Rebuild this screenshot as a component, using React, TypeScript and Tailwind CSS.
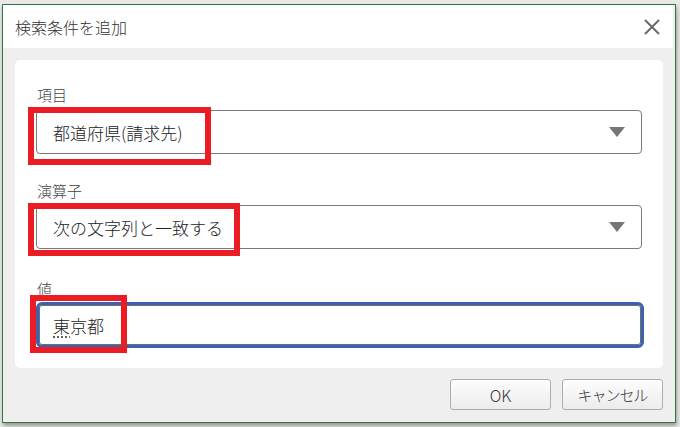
import React from "react";

function Caret() {
  return (
    <svg width="16" height="10" viewBox="0 0 16 10" className="shrink-0">
      <polygon points="0,0 16,0 8,10" fill="#767676" />
    </svg>
  );
}

function CloseIcon() {
  return (
    <svg width="16" height="16" viewBox="0 0 16 16">
      <path d="M1 1 L15 15 M15 1 L1 15" stroke="#6a6a6a" strokeWidth="2" />
    </svg>
  );
}

function Select({ value }: { value: string }) {
  return (
    <div className="flex h-[44px] w-[606px] items-center justify-between rounded-[4px] border border-[#7a7a7a] bg-white pl-[16px] pr-[16px]">
      <span className="text-[17px] font-light leading-none text-[#222]">{value}</span>
      <Caret />
    </div>
  );
}

export default function App() {
  return (
    <div className="relative h-[427px] w-[680px] overflow-hidden bg-[#e9e9e9] font-['Noto_Sans_CJK_JP',sans-serif]">
      <div className="ml-[2px] mt-[4px] flex h-[419px] w-[674px] flex-col border border-[#2e7a3a] bg-[#efefef] shadow-[1px_3px_4px_rgba(0,0,0,0.35)]">
        <div className="mr-[2px] flex h-[43px] items-center justify-between bg-white pl-[12px] pr-[13px]">
          <span className="text-[16px] font-light leading-none text-[#333]">検索条件を追加</span>
          <CloseIcon />
        </div>

        <div className="ml-[12px] mt-[12px] flex h-[308px] w-[648px] flex-col rounded-[5px] bg-white pl-[21px]">
          <div className="mt-[25px] h-[20px] pl-[1px] text-[15px] font-light leading-[20px] text-[#444]">項目</div>
          <div className="mt-[5px]">
            <Select value="都道府県(請求先)" />
          </div>

          <div className="mt-[27px] h-[20px] pl-[1px] text-[15px] font-light leading-[20px] text-[#444]">演算子</div>
          <div className="mt-[4px]">
            <Select value="次の文字列と一致する" />
          </div>

          <div className="mt-[30px] h-[20px] pl-[1px] text-[15px] font-light leading-[20px] text-[#444]">値</div>
          <div className="mt-[3px] flex h-[46px] w-[608px] items-center rounded-[6px] border-[3px] border-[#3a62b0] bg-white pl-[14px] shadow-[inset_0_0_0_1px_#6f6f6f]">
            <span className="text-[17px] font-light leading-none text-[#222]">
              <span className="underline decoration-dotted decoration-[#444] underline-offset-[4px]">東</span>京都
            </span>
          </div>
        </div>

        <div className="mt-[11px] flex justify-end gap-[11px] pr-[12px]">
          <button className="flex h-[31px] w-[101px] items-center justify-center rounded-[3px] border border-[#adadad] bg-gradient-to-b from-[#fdfdfd] to-[#ececec] text-[16px] font-light leading-none text-[#333]">
            OK
          </button>
          <button className="flex h-[31px] w-[101px] items-center justify-center rounded-[3px] border border-[#adadad] bg-gradient-to-b from-[#fdfdfd] to-[#ececec] text-[15px] font-light leading-none tracking-[-1px] text-[#333]">
            キャンセル
          </button>
        </div>
      </div>

      {/* annotation boxes */}
      <div className="absolute left-[28px] top-[107px] h-[58px] w-[183px] border-[6px] border-[#ec1c24]" />
      <div className="absolute left-[28px] top-[203px] h-[53px] w-[212px] border-[6px] border-[#ec1c24]" />
      <div className="absolute left-[30px] top-[295px] h-[58px] w-[97px] border-[6px] border-[#ec1c24]" />
    </div>
  );
}
